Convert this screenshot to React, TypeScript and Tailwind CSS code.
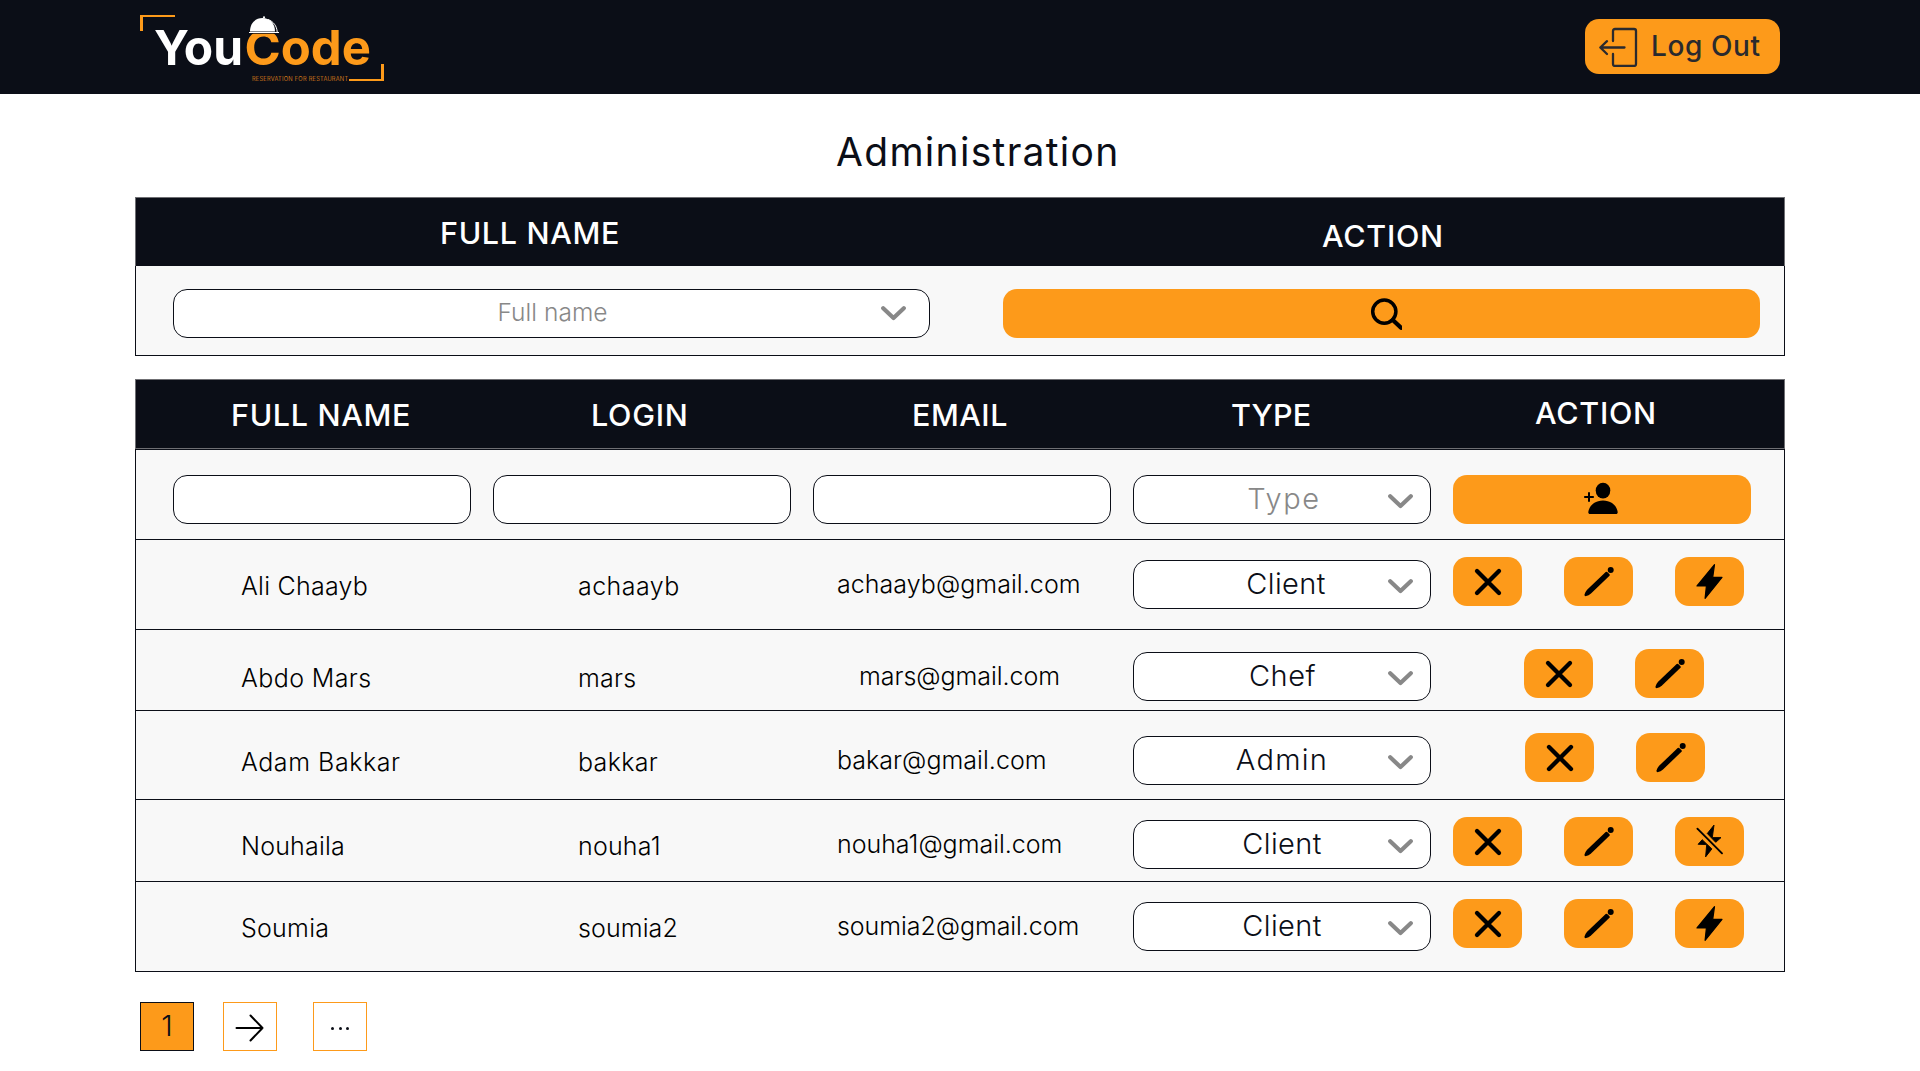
import type { ReactNode } from "react";

type Account = {
  name: string;
  nameClass: string;
  login: string;
  loginClass: string;
  email: string;
  emailClass: string;
  type: string;
  typeClass: string;
  rowClass: string;
  actionsClass: string;
  flash?: "on" | "off";
};

const accounts: Account[] = [
  {
    name: "Ali Chaayb",
    nameClass: "tracking-[0.25px]",
    login: "achaayb",
    loginClass: "tracking-[0.45px]",
    email: "achaayb@gmail.com",
    emailClass: "tracking-[0.05px]",
    type: "Client",
    typeClass: "tracking-[0.4px] pl-[8px]",
    rowClass: "h-[90px] pt-[17px]",
    actionsClass: "",
    flash: "on",
  },
  {
    name: "Abdo Mars",
    nameClass: "tracking-[0.4px]",
    login: "mars",
    loginClass: "tracking-[0.2px]",
    email: "mars@gmail.com",
    emailClass: "tracking-[-0.05px] pl-[22px]",
    type: "Chef",
    typeClass: "tracking-[0.5px] pl-[1px]",
    rowClass: "h-[81px] pt-[19px]",
    actionsClass: "pl-[71px]",
  },
  {
    name: "Adam Bakkar",
    nameClass: "tracking-[0.55px]",
    login: "bakkar",
    loginClass: "tracking-[0.3px]",
    email: "bakar@gmail.com",
    emailClass: "tracking-[0.03px]",
    type: "Admin",
    typeClass: "tracking-[1.3px]",
    rowClass: "h-[89px] pt-[22px]",
    actionsClass: "pl-[72px]",
  },
  {
    name: "Nouhaila",
    nameClass: "tracking-[0.2px]",
    login: "nouha1",
    loginClass: "tracking-[0.2px]",
    email: "nouha1@gmail.com",
    emailClass: "tracking-[-0.03px]",
    type: "Client",
    typeClass: "tracking-[0.4px]",
    rowClass: "h-[82px] pt-[17px]",
    actionsClass: "",
    flash: "off",
  },
  {
    name: "Soumia",
    nameClass: "tracking-[0.25px]",
    login: "soumia2",
    loginClass: "tracking-[0.1px]",
    email: "soumia2@gmail.com",
    emailClass: "tracking-[-0.07px]",
    type: "Client",
    typeClass: "tracking-[0.4px]",
    rowClass: "h-[89px] pt-[17px]",
    actionsClass: "",
    flash: "on",
  },
];

function Logo() {
  return (
    <svg width="248" height="70" viewBox="140 13 248 70" className="block">
      <path d="M140 15h35v2h-32v14h-3z M381 64h3v17h-35v-2h32z" fill="#fd9a1a" />
      <g fontFamily="Inter, sans-serif" fontWeight="700" fontSize="48.5">
        <text x="154" y="65" fill="#fff" textLength="89" lengthAdjust="spacingAndGlyphs">
          You
        </text>
        <text x="244.500" y="65" fill="#fd9a1a" textLength="126.500" lengthAdjust="spacingAndGlyphs">
          Code
        </text>
      </g>
      <path d="M248.500 33.800V31.500H250C250 23 255 17.800 262.500 17.800S275 23 275 31.500h4v2.300z" fill="#0b0e17" />
      <path d="M250 31.500C250 23 255.500 18 262.500 18S275 23 275 31.500z" fill="#fff" />
      <circle cx="264" cy="17.300" r="1.100" fill="#fff" />
      <path d="M249 32.500h30M268 19.500c5.500 2 8.800 6.500 9.200 12.500" stroke="#fff" strokeWidth="1" fill="none" />
      <text
        x="252"
        y="81"
        fill="#fd9a1a"
        fontFamily="Inter, sans-serif"
        fontSize="5.700"
        textLength="96"
      >
        RESERVATION FOR RESTAURANT
      </text>
    </svg>
  );
}

function Chevron() {
  return (
    <svg width="25" height="15" viewBox="0 0 25 15" fill="none" stroke="#888" strokeWidth="4.200">
      <path d="M2.200 2.300 12.500 12 22.800 2.300" strokeLinecap="round" strokeLinejoin="round" />
    </svg>
  );
}

function CrossIcon() {
  return (
    <svg width="69" height="49" viewBox="0 0 69 49">
      <path d="M24 14 46 36M46 14 24 36" stroke="#000" strokeWidth="4.300" strokeLinecap="round" />
    </svg>
  );
}

function PencilIcon() {
  return (
    <svg width="69" height="49" viewBox="0 0 69 49">
      <circle cx="46.700" cy="13.100" r="3" />
      <path d="M41.700 15q.8-.7 1.500 0l2.300 2.300q.7.700 0 1.500L27 36.500Q24.500 38.500 22.200 39.100q-2 .4-1.700-1.500.6-2.500 2.600-4.800z" />
    </svg>
  );
}

function FlashIcon() {
  return (
    <svg width="69" height="49" viewBox="0 0 69 49" strokeLinejoin="round" stroke="#000" strokeWidth="1.200">
      <path d="M39.500 7.600 37.700 20.400H47L30.100 41.400 31.400 29H22z" />
    </svg>
  );
}

function FlashOffIcon() {
  return (
    <svg width="69" height="49" viewBox="0 0 69 49" strokeLinejoin="round" stroke="#000">
      <path d="M22.400 11.700 47 36.300" strokeWidth="1.900" strokeLinecap="round" />
      <path
        d="M39 8.100 37.300 20.600H46L40.700 25.300 32.300 16.500zM23.100 27.300 27.200 22.700 36.900 31.900 30.600 39.900 31.700 27.600z"
        strokeWidth="0.900"
      />
    </svg>
  );
}

function PersonAddIcon() {
  return (
    <svg width="40" height="49" viewBox="129 0 40 49">
      <ellipse cx="150" cy="15.600" rx="7.300" ry="7.900" />
      <path d="M150 25.500c7.500 0 13.700 4.500 14.700 11.500.1 1.200-.6 2-1.700 2h-26c-1.100 0-1.800-.8-1.700-2 1-7 7.200-11.500 14.700-11.500z" />
      <path d="M136 17.200v9.600M131.200 22h9.600" stroke="#000" strokeWidth="2" />
    </svg>
  );
}

function ActionButton({ label, children }: { label: string; children: ReactNode }) {
  return (
    <button aria-label={label} className="h-[49px] w-[69px] rounded-[14px] bg-[#fd9a1a]">
      {children}
    </button>
  );
}

function Select({ children, className, textClass }: { children: ReactNode; className: string; textClass: string }) {
  return (
    <div
      className={`flex h-[49px] items-center rounded-[14px] border border-[#0b0e17] bg-white ${className}`}
    >
      <span className={`flex-1 text-center ${textClass}`}>{children}</span>
      <Chevron />
    </div>
  );
}

function AccountRow({ account, last }: { account: Account; last: boolean }) {
  return (
    <div className={`flex items-start text-[25px] text-black ${last ? "" : "border-b border-[#0b0e17]"} ${account.rowClass}`}>
      <div className={`mt-[5px] flex h-[49px] w-[442px] items-center pl-[105px] ${account.nameClass}`}>
        {account.name}
      </div>
      <div className={`mt-[5px] flex h-[49px] w-[259px] items-center ${account.loginClass}`}>{account.login}</div>
      <div className={`mt-[3px] flex h-[49px] w-[296px] items-center ${account.emailClass}`}>
        {account.email}
      </div>
      <Select
        className="mt-[3px] w-[298px] pt-[3px] pr-[17px] pl-[42px]"
        textClass={`-mt-[5px] text-[29px] leading-none text-[#0b0e17] ${account.typeClass}`}
      >
        {account.type}
      </Select>
      <div className={`ml-[22px] flex gap-[42px] ${account.actionsClass}`}>
        <ActionButton label="Delete">
          <CrossIcon />
        </ActionButton>
        <ActionButton label="Edit">
          <PencilIcon />
        </ActionButton>
        {account.flash && (
          <ActionButton label="Toggle">{account.flash === "on" ? <FlashIcon /> : <FlashOffIcon />}</ActionButton>
        )}
      </div>
    </div>
  );
}

export default function App() {
  return (
    <div className="h-[1071px] overflow-hidden bg-white font-['Inter',sans-serif] font-[365] text-[#0b0e17]">
      <header className="flex h-[94px] items-start justify-between bg-[#0b0e17] pr-[140px] pl-[140px]">
        <div className="mt-[13px]">
          <Logo />
        </div>
        <button className="mt-[19px] flex h-[55px] w-[195px] items-center rounded-[14px] bg-[#fd9a1a] pl-[13px] text-[#2a2a2e]">
          <svg width="40" height="40" viewBox="0 0 40 40" fill="none" stroke="#2a2a2e" strokeWidth="2.300" strokeLinecap="round" strokeLinejoin="round">
            <path d="M15 14V4q0-2 2-2h19q2 0 2 2v33q0 2-2 2H17q-2 0-2-2V27" />
            <path d="M26.500 20.500h-24M9 14.200 2.300 20.500 9 27" />
          </svg>
          <span className="mt-[-2px] ml-[13px] text-[28px] leading-none font-[540] tracking-[0.6px]">Log Out</span>
        </button>
      </header>

      <main className="px-[135px]">
        <h1 className="flex h-[103px] items-center pt-[13px] pl-[701px] text-[39px] font-[420] tracking-[1.300px]">
          Administration
        </h1>

        <section className="h-[159px] w-[1650px] border border-[#0b0e17] bg-[#f8f8f8]">
          <div className="-mx-px -mt-px flex h-[69px] items-start border-x border-t border-x-[#6f6f73] border-t-[#6f6f73] bg-[#0b0e17] text-[30.500px] leading-[30px] font-medium text-white">
            <div className="mt-[20px] w-[883px] pl-[304px] tracking-[0.650px]">FULL NAME</div>
            <div className="mt-[23px] pl-[303px] tracking-[0.700px]">ACTION</div>
          </div>
          <div className="flex pt-[23px] pl-[37px]">
            <Select
              className="w-[757px] pr-[23px] pl-[50px]"
              textClass="-mt-[2px] text-[24.500px] leading-none tracking-[0.050px] text-[#888]"
            >
              Full name
            </Select>
            <button aria-label="Search" className="ml-[73px] flex h-[49px] w-[757px] justify-center rounded-[14px] bg-[#fd9a1a]">
              <svg width="40" height="49" viewBox="359 0 40 49" fill="none" stroke="#000">
                <circle cx="381.300" cy="22.600" r="11.600" strokeWidth="3.500" />
                <path d="M389.800 31 398 38.800" strokeWidth="4.200" strokeLinecap="round" />
              </svg>
            </button>
          </div>
        </section>

        <section className="mt-[23px] h-[593px] w-[1650px] border border-[#0b0e17] bg-[#f8f8f8]">
          <div className="-mx-px -mt-px flex h-[70px] items-start border border-[#6f6f73] bg-[#0b0e17] text-[30.500px] leading-[30px] font-medium text-white">
            <div className="mt-[20px] w-[355px] pl-[95px] tracking-[0.650px]">FULL NAME</div>
            <div className="mt-[20px] w-[321px] pl-[100px] tracking-[0.700px]">LOGIN</div>
            <div className="mt-[20px] w-[320px] pl-[100px] tracking-[0.500px]">EMAIL</div>
            <div className="mt-[20px] w-[321px] pl-[99px] tracking-[0.200px]">TYPE</div>
            <div className="mt-[18px] pl-[82px] tracking-[0.700px]">ACTION</div>
          </div>
          <div className="flex h-[91px] gap-[22px] border-y border-[#0b0e17] pt-[25px] pl-[37px]">
            <div className="h-[49px] w-[298px] rounded-[14px] border border-[#0b0e17] bg-white" />
            <div className="h-[49px] w-[298px] rounded-[14px] border border-[#0b0e17] bg-white" />
            <div className="h-[49px] w-[298px] rounded-[14px] border border-[#0b0e17] bg-white" />
            <Select
              className="w-[298px] pt-[3px] pr-[17px] pl-[42px]"
              textClass="-mt-[5px] pl-[4px] text-[29px] leading-none tracking-[1.600px] text-[#888]"
            >
              Type
            </Select>
            <button aria-label="Add user" className="flex h-[49px] w-[298px] justify-center rounded-[14px] bg-[#fd9a1a]">
              <PersonAddIcon />
            </button>
          </div>
          {accounts.map((account, i) => (
            <AccountRow key={account.login} account={account} last={i === accounts.length - 1} />
          ))}
        </section>

        <nav className="mt-[30px] flex pl-[5px]">
          <button className="flex h-[49px] w-[54px] items-center justify-center border border-[#0b0e17] bg-[#fd9a1a] pb-[2px] text-[29px] leading-none">
            1
          </button>
          <button aria-label="Next" className="ml-[29px] flex h-[49px] w-[54px] items-center justify-center border border-[#fd9a1a] pr-[2px] pt-[2px]">
            <svg width="29" height="28" viewBox="0 0 29 28" fill="none" stroke="#000" strokeWidth="2" strokeLinecap="round" strokeLinejoin="round">
              <path d="M1.500 14h26M15.500 1.500 27.500 14 15.500 26.500" />
            </svg>
          </button>
          <button aria-label="More" className="ml-[36px] flex h-[49px] w-[54px] items-center justify-center gap-[4.500px] border border-[#fd9a1a] pt-[4px]">
            <i className="size-[3px] rounded-full bg-[#0b0e17]" />
            <i className="size-[3px] rounded-full bg-[#0b0e17]" />
            <i className="size-[3px] rounded-full bg-[#0b0e17]" />
          </button>
        </nav>
      </main>
    </div>
  );
}
